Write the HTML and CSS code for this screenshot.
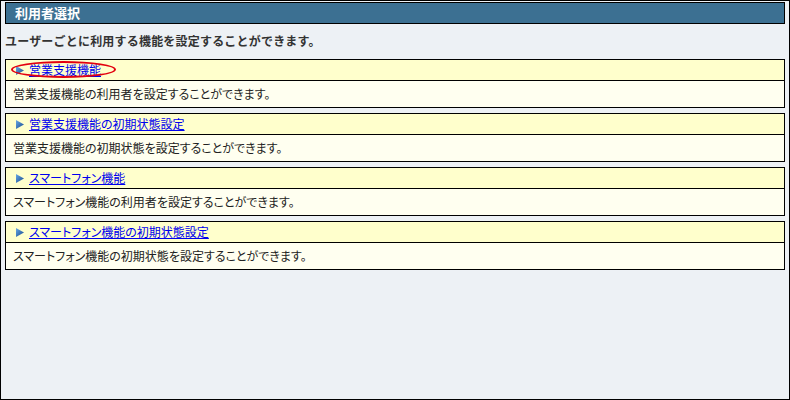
FILE: index.html
```html
<!DOCTYPE html>
<html>
<head>
  <meta charset="utf-8">
  <title>利用者選択</title>
  <link rel="stylesheet" href="styles.css">
</head>
<body>
  <div class="frame">
    <div class="title-bar">利用者選択</div>
    <p class="lead">ユーザーごとに利用する機能を設定することができます。</p>

    <div class="section">
      <div class="sec-head marked">
        <svg class="arrow" width="8" height="9" viewBox="0 0 8 9"><defs><linearGradient id="g1" x1="0" y1="0" x2="1" y2="1"><stop offset="0" stop-color="#6aa9e6"/><stop offset="1" stop-color="#14488c"/></linearGradient></defs><path d="M0 0 L8 4.5 L0 9 Z" fill="url(#g1)"/></svg>
        <a href="#">営業支援機能</a>
        <span class="circle"></span>
      </div>
      <div class="sec-desc">営業支援機能の利用者を設定することができます。</div>
    </div>

    <div class="section">
      <div class="sec-head">
        <svg class="arrow" width="8" height="9" viewBox="0 0 8 9"><path d="M0 0 L8 4.5 L0 9 Z" fill="url(#g1)"/></svg>
        <a href="#">営業支援機能の初期状態設定</a>
      </div>
      <div class="sec-desc">営業支援機能の初期状態を設定することができます。</div>
    </div>

    <div class="section">
      <div class="sec-head">
        <svg class="arrow" width="8" height="9" viewBox="0 0 8 9"><path d="M0 0 L8 4.5 L0 9 Z" fill="url(#g1)"/></svg>
        <a href="#">スマートフォン機能</a>
      </div>
      <div class="sec-desc">スマートフォン機能の利用者を設定することができます。</div>
    </div>

    <div class="section">
      <div class="sec-head">
        <svg class="arrow" width="8" height="9" viewBox="0 0 8 9"><path d="M0 0 L8 4.5 L0 9 Z" fill="url(#g1)"/></svg>
        <a href="#">スマートフォン機能の初期状態設定</a>
      </div>
      <div class="sec-desc">スマートフォン機能の初期状態を設定することができます。</div>
    </div>
  </div>
</body>
</html>
```

FILE: styles.css
```css
body {
  margin: 0;
  padding: 0;
  font-family: "Noto Sans CJK JP", "Noto Sans", sans-serif;
  font-size: 12px;
  font-feature-settings: "palt";
  color: #222;
}

.frame {
  box-sizing: border-box;
  width: 790px;
  height: 400px;
  border: 1px solid #000;
  background-color: #edf1f5;
  padding: 1px 4px;
}

.title-bar {
  height: 20px;
  line-height: 20px;
  border: 1px solid #000;
  background-color: #3c7092;
  color: #fff;
  font-size: 13px;
  font-weight: bold;
  padding-left: 9px;
}

.lead {
  margin: 0;
  padding: 8px 0 9px 0;
  line-height: 18px;
  font-weight: bold;
  font-feature-settings: normal;
  letter-spacing: 0.2px;
  color: #333;
}

.section {
  border: 1px solid #000;
  margin-bottom: 5px;
}

.sec-head {
  position: relative;
  display: flex;
  align-items: center;
  gap: 5px;
  height: 20px;
  padding-left: 10px;
  background-color: #ffffcc;
  border-bottom: 1px solid #000;
}

.sec-head a {
  color: #0000ee;
  text-decoration: underline;
  line-height: 20px;
}

.arrow {
  display: block;
}

.sec-desc {
  height: 26px;
  line-height: 26px;
  padding-left: 7px;
  background-color: #fffff0;
}

/* red marker round the first link */
.circle {
  position: absolute;
  left: 5px;
  top: 1px;
  width: 105px;
  height: 17px;
  box-sizing: border-box;
  border: 2px solid #e3000f;
  border-radius: 50%;
}
```
